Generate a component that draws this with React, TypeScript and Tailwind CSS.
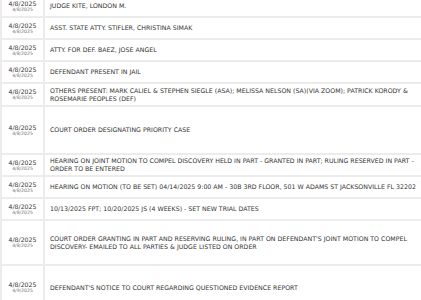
type Entry = { date: string; filed: string; text: string; h: string };

const entries: Entry[] = [
  { date: "4/8/2025", filed: "4/8/2025", text: "JUDGE KITE, LONDON M.", h: "h-[22px]" },
  { date: "4/8/2025", filed: "4/8/2025", text: "ASST. STATE ATTY. STIFLER, CHRISTINA SIMAK", h: "h-[22px]" },
  { date: "4/8/2025", filed: "4/8/2025", text: "ATTY. FOR DEF. BAEZ, JOSE ANGEL", h: "h-[22px]" },
  { date: "4/8/2025", filed: "4/8/2025", text: "DEFENDANT PRESENT IN JAIL", h: "h-[22px]" },
  {
    date: "4/8/2025",
    filed: "4/8/2025",
    text: "OTHERS PRESENT: MARK CALIEL & STEPHEN SIEGLE (ASA); MELISSA NELSON (SA)(VIA ZOOM); PATRICK KORODY & ROSEMARIE PEOPLES (DEF)",
    h: "h-[23px]",
  },
  { date: "4/8/2025", filed: "4/8/2025", text: "COURT ORDER DESIGNATING PRIORITY CASE", h: "h-[48px]" },
  {
    date: "4/8/2025",
    filed: "4/8/2025",
    text: "HEARING ON JOINT MOTION TO COMPEL DISCOVERY HELD IN PART - GRANTED IN PART; RULING RESERVED IN PART - ORDER TO BE ENTERED",
    h: "h-[22px]",
  },
  {
    date: "4/8/2025",
    filed: "4/8/2025",
    text: "HEARING ON MOTION (TO BE SET) 04/14/2025 9:00 AM - 30B 3RD FLOOR, 501 W ADAMS ST JACKSONVILLE FL 32202",
    h: "h-[22px]",
  },
  { date: "4/8/2025", filed: "4/8/2025", text: "10/13/2025 FPT; 10/20/2025 JS (4 WEEKS) - SET NEW TRIAL DATES", h: "h-[22px]" },
  {
    date: "4/8/2025",
    filed: "4/8/2025",
    text: "COURT ORDER GRANTING IN PART AND RESERVING RULING, IN PART ON DEFENDANT'S JOINT MOTION TO COMPEL DISCOVERY- EMAILED TO ALL PARTIES & JUDGE LISTED ON ORDER",
    h: "h-[45px]",
  },
  { date: "4/8/2025", filed: "4/9/2025", text: "DEFENDANT'S NOTICE TO COURT REGARDING QUESTIONED EVIDENCE REPORT", h: "h-[45px]" },
];

export default function App() {
  return (
    <div className="w-[421px] h-[300px] overflow-hidden bg-white font-['DejaVu_Sans',Verdana,sans-serif] text-[#333]">
      <div className="-mt-[4px] border-l-2 border-[#ececec]">
        {entries.map((e, i) => (
          <div key={i} className={`flex border-b-2 border-[#ececec] ${e.h}`}>
            <div className="w-[43px] shrink-0 flex flex-col items-center justify-center border-r-2 border-[#ececec]">
              <span className="text-[6.2px] leading-[7px]">{e.date}</span>
              <span className="text-[4.6px] leading-[6px] text-[#777]">{e.filed}</span>
            </div>
            <div className="flex-1 flex items-center pl-[5px] pr-[3px]">
              <p className="text-[6.25px] leading-[8px]">{e.text}</p>
            </div>
          </div>
        ))}
      </div>
    </div>
  );
}
